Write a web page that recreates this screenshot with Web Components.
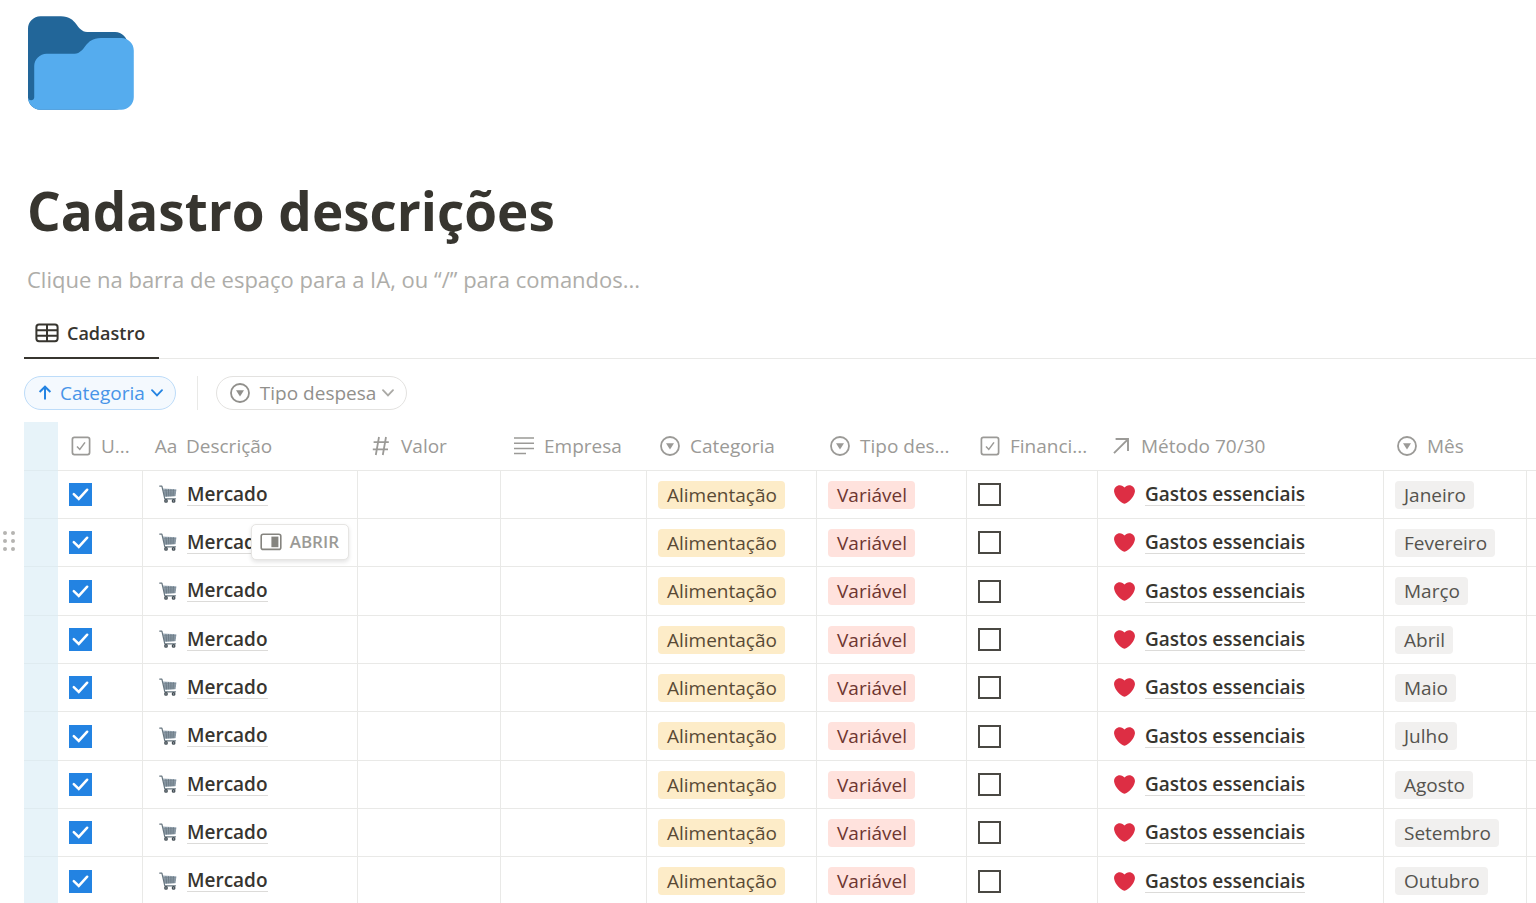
<!DOCTYPE html>
<html lang="pt-BR">
<head>
<meta charset="utf-8">
<meta name="viewport" content="width=device-width, initial-scale=1">
<title>Cadastro descrições</title>
<style>
  html { scrollbar-width: none; background: #fff; }
  body {
    margin: 0;
    font-family: "Open Sans", "Noto Sans", sans-serif;
    font-size: 19px;
    line-height: 28px;
    color: #37352f;
    --ink: #37352f;
    --muted: #9b9a97;
    --line: #e9e9e7;
    --accent: #2383e2;
    --gutter: 24px;
  }
</style>
</head>
<body>
<cadastro-page></cadastro-page>

<script>
const define = (name, html, setup) => {
  const tpl = document.createElement('template');
  tpl.innerHTML = html;
  customElements.define(name, class extends HTMLElement {
    constructor() {
      super();
      this.attachShadow({ mode: 'open' }).append(tpl.content.cloneNode(true));
    }
    connectedCallback() { if (setup) setup(this, this.shadowRoot); }
  });
};

const ICONS = {
  folder: ['0 0 36 36', '<path fill="#226699" d="M0 29c0 2.209 1.791 4 4 4h24c2.209 0 4-1.791 4-4V12c0-2.209-1.791-4-4-4h-9c-3.562 0-3-5-8.438-5H4C1.791 3 0 4.791 0 7v22z"/><path fill="#55ACEE" d="M30 10h-6.562C18 10 18.562 15 15 15H6c-2.209 0-4 1.791-4 4v10c0 .553-.448 1-1 1s-1-.447-1-1c0 2.209 1.791 4 4 4h26c2.209 0 4-1.791 4-4V14c0-2.209-1.791-4-4-4z"/>'],
  heart: ['0 0 36 36', '<path fill="#DD2E44" d="M35.885 11.833c0-5.45-4.418-9.868-9.867-9.868-3.308 0-6.227 1.633-8.018 4.129-1.791-2.496-4.71-4.129-8.017-4.129-5.45 0-9.868 4.417-9.868 9.868 0 .772.098 1.52.266 2.241C1.751 22.587 11.216 31.568 18 34.034c6.783-2.466 16.249-11.447 17.617-19.959.17-.721.268-1.469.268-2.242z"/>'],
  cart: ['0 0 18 18', '<path d="M4 3.6 17.4 4.2 16.4 11.2 5.4 12z" fill="#9fadb9"/><path d="M4.2 5.9h13M4.6 8h12.4M5 10h11.6M6.9 4l.8 7.6M9.4 4l.4 7.4M11.9 4.2v7.2M14.4 4.2l-.4 7" stroke="#66757f" stroke-width=".8" fill="none"/><path d="M.7 1.1h2.2l2.9 12.7h10.7" stroke="#66757f" stroke-width="1.2" fill="none" stroke-linecap="round" stroke-linejoin="round"/><circle cx="7" cy="15.9" r="1.9" fill="#414a50"/><circle cx="14.6" cy="15.9" r="1.9" fill="#414a50"/><circle cx="7" cy="15.9" r=".7" fill="#aab8c2"/><circle cx="14.6" cy="15.9" r=".7" fill="#aab8c2"/>'],
  table: ['0 0 24 20', '<g fill="none" stroke="currentColor" stroke-width="2"><rect x="1.4" y="1.6" width="21.2" height="16.6" rx="2.6"/><path d="M1.4 7.2h21.2M1.4 12.7h21.2M12 1.6v16.6"/></g>'],
  up: ['0 0 14 16', '<path d="M7 14.6V2M1.6 7 7 1.7 12.4 7" fill="none" stroke="currentColor" stroke-width="2"/>'],
  down: ['0 0 12 8', '<path d="M1 1.2 6 6.4l5-5.2" fill="none" stroke="currentColor" stroke-width="1.8" stroke-linecap="round"/>'],
  select: ['0 0 20 20', '<circle cx="10" cy="10" r="9" fill="none" stroke="currentColor" stroke-width="1.8"/><path d="M6 7.2h8L10 13.6z" fill="currentColor"/>'],
  check: ['0 0 20 20', '<rect x="1.4" y="1.4" width="17.2" height="17.2" rx="2" fill="none" stroke="currentColor" stroke-width="1.7"/><path d="m6 10.4 2.8 3L14 6.4" fill="none" stroke="currentColor" stroke-width="1.5"/>'],
  number: ['0 0 20 20', '<path d="M2.6 6.2h15.2M1.8 13.4H17M8 1 4.8 19M15 1l-3.2 18" fill="none" stroke="currentColor" stroke-width="1.8"/>'],
  text: ['0 0 20 20', '<path d="M0 2h20M0 7.2h20M0 12.4h20M0 17.6h12" fill="none" stroke="currentColor" stroke-width="1.5"/>'],
  relation: ['0 0 20 20', '<path d="M3 17.2 16.6 3.6M4.6 3H17v12" fill="none" stroke="currentColor" stroke-width="1.9"/>'],
  peek: ['0 0 22 18', '<rect x="1.2" y="1.2" width="19.6" height="15.2" rx="2" fill="none" stroke="currentColor" stroke-width="1.6"/><path d="M11.4 3.6h7v10.6h-7z" fill="currentColor"/>'],
  grip: ['0 0 14 24', '<g fill="currentColor"><circle cx="3" cy="4" r="2"/><circle cx="11" cy="4" r="2"/><circle cx="3" cy="12" r="2"/><circle cx="11" cy="12" r="2"/><circle cx="3" cy="20" r="2"/><circle cx="11" cy="20" r="2"/></g>'],
  tick: ['0 0 24 24', '<path d="m5 11.6 5.2 5L19 7" fill="none" stroke="#fff" stroke-width="2.6" stroke-linecap="round"/>']
};

define('ui-icon', `
  <style>
    :host { display: block; flex: none; width: var(--w, 20px); height: var(--h, var(--w, 20px)); }
    svg { display: block; width: 100%; height: 100%; }
  </style>
  <svg aria-hidden="true"></svg>`, (el, root) => {
  const [box, art] = ICONS[el.getAttribute('name')];
  const svg = root.querySelector('svg');
  svg.setAttribute('viewBox', box);
  svg.innerHTML = art;
});

define('page-heading', `
  <style>
    :host { display: block; padding: 7px 3px 0; }
    ui-icon { --w: 112px; margin-left: 1px; }
    h1 { margin: 60px 0 0; font-size: 53px; line-height: 64px; font-weight: 700; }
    p { margin: 20px 0 0; font-size: 22px; line-height: 32px; color: #aeada9; }
  </style>
  <ui-icon name="folder"></ui-icon>
  <h1><slot></slot></h1>
  <p><slot name="hint"></slot></p>`);

define('view-tabs', `
  <style>
    :host { display: block; margin-top: 13px; }
    nav { display: flex; box-shadow: inset 0 -1px var(--line); }
    a {
      display: flex; align-items: center; gap: 8px; padding: 11px 14px 10px 11px;
      border-bottom: 2px solid var(--ink); color: inherit; text-decoration: none; font-weight: 600; font-size: 18px;
    }
    ui-icon { --w: 24px; --h: 20px; }
  </style>
  <nav aria-label="Visualizações"><a href="#cadastro" aria-current="page"><ui-icon name="table"></ui-icon><slot></slot></a></nav>`);

/* Puts the icon named by the host's attribute into the mark holder. */
const placeIcon = (el, root) => {
  root.querySelector('.lead').innerHTML = `<ui-icon name="${el.getAttribute('icon')}"></ui-icon>`;
};

define('filter-pill', `
  <style>
    :host { display: block; }
    button {
      display: flex; align-items: center; gap: 6px; box-sizing: border-box; height: 34px; padding: 0 12px 0 13px;
      border: 1px solid #e3e2e0; border-radius: 17px; background: none; color: #91908c; font: inherit;
    }
    .lead { --w: 20px; margin-right: 4px; }
    .more { --w: 12px; --h: 8px; color: #aaa9a5; }
    :host([active]) button { border-color: #bddcf9; background: #f4f9fe; color: #4794e8; }
    :host([active]) .lead { --w: 14px; --h: 16px; margin-right: 2px; }
    :host([active]) .more, :host([active]) .lead { color: var(--accent); }
  </style>
  <button type="button"><span class="lead"></span><slot></slot><ui-icon class="more" name="down"></ui-icon></button>`, placeIcon);

define('filter-bar', `
  <style>
    :host { display: flex; align-items: stretch; margin-top: 17px; }
    i { width: 1px; margin: 0 18px 0 21px; background: var(--line); }
  </style>
  <slot name="sort"></slot><i></i><slot></slot>`);

define('tag-chip', `
  <style>
    :host { display: block; width: fit-content; height: 28px; padding: 0 8px 0 9px; border-radius: 4px; white-space: nowrap; background: #f1f0ef; color: #55534e; }
    :host([tone="yellow"]) { background: #fdecc8; color: #594a35; }
    :host([tone="red"]) { background: #ffe2dd; color: #6e3630; }
  </style>
  <slot></slot>`);

define('page-link', `
  <style>
    :host { display: flex; align-items: center; gap: 10px; --w: 21px; }
    a { color: inherit; text-decoration: none; font-weight: 600; line-height: 22px; border-bottom: 1px solid #dcdbd9; white-space: nowrap; }
  </style>
  <span class="lead"></span><a href="#pagina"><slot></slot></a>`, placeIcon);

define('check-field', `
  <style>
    :host { display: block; }
    label { display: grid; width: 23px; height: 23px; }
    input, ui-icon { grid-area: 1 / 1; }
    input { appearance: none; margin: 0; box-sizing: border-box; width: 23px; height: 23px; border: 2px solid #4a4843; background: #fff; }
    input:checked { border: 0; background: var(--accent); }
    ui-icon { --w: 23px; display: none; pointer-events: none; }
    input:checked + ui-icon { display: block; }
  </style>
  <label><input type="checkbox"><ui-icon name="tick"></ui-icon></label>`, (el, root) => {
  const input = root.querySelector('input');
  input.checked = el.hasAttribute('checked');
  input.setAttribute('aria-label', el.getAttribute('label'));
});

define('column-label', `
  <style>
    :host { display: flex; align-items: center; gap: 8px; padding-left: 11px; color: var(--muted); font-weight: 400; white-space: nowrap; }
    .mark { display: flex; justify-content: center; width: 24px; flex: none; font-weight: 500; }
  </style>
  <span class="mark"></span><span><slot></slot></span>`, (el, root) => {
  const kind = el.getAttribute('kind');
  root.querySelector('.mark').innerHTML = kind === 'title' ? 'Aa' : `<ui-icon name="${kind}"></ui-icon>`;
});

define('open-button', `
  <style>
    :host { display: block; }
    button {
      display: flex; align-items: center; gap: 8px; box-sizing: border-box; height: 36px; padding: 0 9px 0 8px;
      border: 1px solid #e6e5e3; border-radius: 5px; background: #fff; box-shadow: 0 2px 4px rgba(15,15,15,.12);
      font: 600 17px/24px "Open Sans", "Noto Sans", sans-serif; color: #9b9a96;
    }
    ui-icon { --w: 22px; --h: 18px; color: #85847f; }
  </style>
  <button type="button"><ui-icon name="peek"></ui-icon>ABRIR</button>`);

const MONTHS = ['Janeiro', 'Fevereiro', 'Março', 'Abril', 'Maio', 'Julho', 'Agosto', 'Setembro', 'Outubro'];
const COLUMNS = [
  ['check', 'U...', 85], ['title', 'Descrição', 215], ['number', 'Valor', 143], ['text', 'Empresa', 146],
  ['select', 'Categoria', 170], ['select', 'Tipo des...', 150], ['check', 'Financi...', 131],
  ['relation', 'Método 70/30', 286], ['select', 'Mês', 143]
];
const HOVERED = 1;

define('records-table', `
  <style>
    :host { display: block; margin-top: 12px; }
    table { width: 100%; table-layout: fixed; border-collapse: separate; border-spacing: 0; }
    th, td { box-sizing: border-box; height: 48px; padding: 0; border-bottom: 1px solid var(--line); text-align: left; vertical-align: middle; }
    th { height: 49px; }
    tbody tr:nth-child(3n) td { height: 49px; }
    td { padding-left: 11px; border-right: 1px solid var(--line); }
    .rail { position: relative; background: #e7f3f9; border-right: 0; border-color: #dfebf0; }
    td:last-child { border-right: 0; }
    .name { position: relative; padding-left: 16px; }
    .name page-link { --w: 18px; padding-bottom: 1px; }
    .link { padding-left: 16px; }
    open-button { position: absolute; top: 5px; right: 8px; }
    .grip { position: absolute; left: -22px; top: 10px; display: block; padding: 0; border: 0; background: none; color: #b5b4b1; }
    .grip ui-icon { --w: 14px; --h: 24px; }
  </style>
  <table>
    <colgroup><col style="width:34px">${COLUMNS.map(c => `<col style="width:${c[2]}px">`).join('')}<col></colgroup>
    <thead><tr><th class="rail"></th>${COLUMNS.map(c => `<th scope="col"><column-label kind="${c[0]}">${c[1]}</column-label></th>`).join('')}<th></th></tr></thead>
    <tbody>${MONTHS.map((month, i) => `
      <tr>
        <td class="rail">${i === HOVERED ? '<button class="grip" type="button" aria-label="Mover linha"><ui-icon name="grip"></ui-icon></button>' : ''}</td>
        <td><check-field checked label="Usar ${month}"></check-field></td>
        <td class="name"><page-link icon="cart">Mercado</page-link>${i === HOVERED ? '<open-button></open-button>' : ''}</td>
        <td></td>
        <td></td>
        <td><tag-chip tone="yellow">Alimentação</tag-chip></td>
        <td><tag-chip tone="red">Variável</tag-chip></td>
        <td><check-field label="Financiamento ${month}"></check-field></td>
        <td class="link"><page-link icon="heart">Gastos essenciais</page-link></td>
        <td><tag-chip>${month}</tag-chip></td>
        <td></td>
      </tr>`).join('')}
    </tbody>
  </table>`);

define('cadastro-page', `
  <style>
    :host { display: block; }
    main { padding-left: var(--gutter); }
  </style>
  <main>
    <page-heading>Cadastro descrições<span slot="hint">Clique na barra de espaço para a IA, ou “/” para comandos...</span></page-heading>
    <view-tabs>Cadastro</view-tabs>
    <filter-bar>
      <filter-pill slot="sort" active icon="up">Categoria</filter-pill>
      <filter-pill icon="select">Tipo despesa</filter-pill>
    </filter-bar>
    <records-table></records-table>
  </main>`);
</script>
</body>
</html>
